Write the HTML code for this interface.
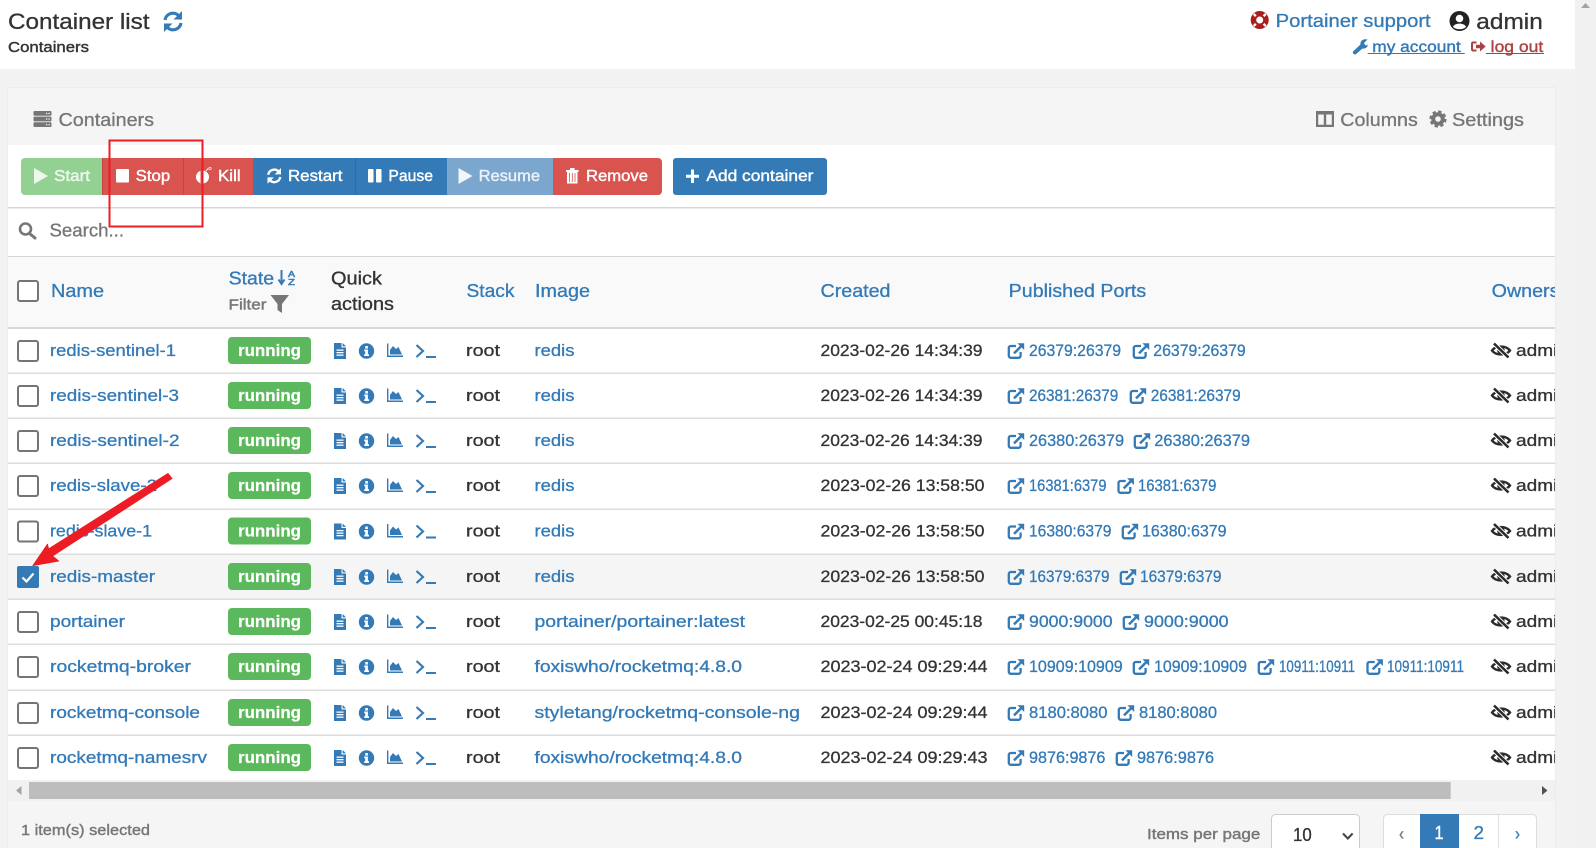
<!DOCTYPE html>
<html lang="en"><head><meta charset="utf-8"><title>Container list</title>
<style>
html,body{margin:0;padding:0;background:#f2f2f2;width:1596px;height:848px;overflow:hidden}
svg{display:block}
text{font-family:"Liberation Sans",sans-serif;font-size:16.5px;fill:#333;stroke:currentColor;stroke-width:.3;color:#333}
.l{fill:#337ab7;color:#337ab7}
.g{fill:#767676;color:#767676}
.w{fill:#fff;color:#fff;font-size:16px;stroke-width:.42}
.h{font-size:18px}
.b{font-weight:bold;font-size:17px;fill:#fff;color:#fff;stroke-width:.2}
.cb{fill:#fff;stroke:#757575;stroke-width:2}
.bd{fill:#5cb85c}
.ln{fill:#ddd}
</style></head><body>
<svg xmlns="http://www.w3.org/2000/svg" width="1596" height="848" viewBox="0 0 1596 848">
<defs>
<clipPath id="card"><rect x="8" y="88" width="1547" height="760"/></clipPath>
<g id="qa" fill="#337ab7">
 <path d="M334 -8H341.5V-3.5H346V8H334Z"/><path d="M342.6 -8L346 -4.6H342.6Z"/>
 <rect x="336.5" y="-1.5" width="7" height="1.3" fill="#fff"/><rect x="336.5" y="1" width="7" height="1.3" fill="#fff"/><rect x="336.5" y="3.5" width="7" height="1.3" fill="#fff"/>
 <circle cx="366.5" cy="0" r="7.7"/><rect x="365.2" y="-5" width="2.7" height="2.6" fill="#fff"/><path d="M364.2 -1.5H367.9V3.2H369V5H364.2V3.2H365.2V0.2H364.2Z" fill="#fff"/>
 <path d="M387 -7.5H388.4V4.5H403V6H387Z"/><path d="M390 3.5V-1L393 -5L396 -2L398.5 -4L402 3.5Z"/>
 <path d="M416.5 -6L423 0L416.5 6" fill="none" stroke="#337ab7" stroke-width="2.2"/><rect x="426" y="5" width="10" height="2"/>
</g>
<g id="ext">
 <path d="M12.6 9v3.8a2 2 0 0 1-2 2H2.8a2 2 0 0 1-2-2V5a2 2 0 0 1 2-2H8" fill="none" stroke="#337ab7" stroke-width="2.3"/>
 <path d="M6 10.4L13 3.4" fill="none" stroke="#337ab7" stroke-width="2.5"/><path d="M9.4 .2H16.2V7Z" fill="#337ab7"/>
</g>
<g id="eye">
 <path d="M1 7.5C4.5 2.2 15 2.2 19 7.5C15 12.8 5 12.8 1 7.5Z" fill="none" stroke="#2b2b2b" stroke-width="2.400"/>
 <circle cx="10" cy="7.5" r="3.800" fill="#2b2b2b"/>
 <path d="M3 0.5L17.5 14.500" stroke="#fff" stroke-width="4.400"/><path d="M3 0.5L17.5 14.500" stroke="#2b2b2b" stroke-width="2.600"/>
</g>
<g id="rowbg"><rect x="18" y="-10" width="20" height="20" rx="2" class="cb"/><rect x="228" y="-14" width="83" height="27" rx="4" class="bd"/><text class="b" x="238" y="5" textLength="63" lengthAdjust="spacingAndGlyphs">running</text><use href="#qa"/><use href="#eye" x="1491" y="-8"/></g>
<g id="ref"><path d="M3 9A8 8 0 0 1 17 5" fill="none" stroke="currentColor" stroke-width="3.200"/><path d="M20 0V8.5H11.5Z" fill="currentColor"/><path d="M19 12A8 8 0 0 1 5 16" fill="none" stroke="currentColor" stroke-width="3.200"/><path d="M2 21V12.5H10.5Z" fill="currentColor"/></g>
</defs>

<!-- page -->
<rect width="1596" height="848" fill="#f2f2f2"/>
<rect width="1575" height="69" fill="#fff"/>
<rect x="1575" width="21" height="848" fill="#f1f1f1"/>
<path d="M1581 8L1585.5 3L1590 8Z" fill="#a3a3a3"/>

<text x="8" y="29" style="font-size:22px" textLength="141.500" lengthAdjust="spacingAndGlyphs">Container list</text>
<use href="#ref" x="162" y="11" style="color:#337ab7"/>
<text x="8" y="52" style="font-size:14.500px;stroke-width:.4" textLength="81" lengthAdjust="spacingAndGlyphs">Containers</text>

<g transform="translate(1250.7,11)"><circle cx="9" cy="9" r="9" fill="#a91e1e"/><path d="M3 3L15 15M15 3L3 15" stroke="#fff" stroke-width="2.300"/><circle cx="9" cy="9" r="5.500" fill="#a91e1e"/><circle cx="9" cy="9" r="3.500" fill="#fff"/></g>
<text class="l" x="1275.7" y="27" style="font-size:18.500px" textLength="155" lengthAdjust="spacingAndGlyphs">Portainer support</text>
<g transform="translate(1449.5,11)"><circle cx="10" cy="10" r="10" fill="#222"/><circle cx="10" cy="7.500" r="3.800" fill="#fff"/><path d="M3.500 16C4.500 11.500 15.500 11.500 16.500 16C13 19 7 19 3.500 16Z" fill="#fff"/></g>
<text x="1476.3" y="29" style="font-size:22px" textLength="66.500" lengthAdjust="spacingAndGlyphs">admin</text>
<path d="M1353 51.500L1360.500 44.500C1360 41 1363 38.500 1367.500 39.500L1364 43L1365 45L1367.500 45.500L1368 43C1368.500 47 1365.500 49 1362.500 48.500L1355.500 54.500C1353.500 54.500 1352.500 53 1353 51.500Z" fill="#337ab7"/>
<text class="l" x="1372.3" y="52" style="font-size:16px;stroke-width:.4" textLength="88.500" lengthAdjust="spacingAndGlyphs">my account</text>
<rect x="1367.7" y="53" width="97" height="1" fill="#337ab7"/>
<path d="M1476.500 42.500H1473C1472 42.500 1472 43 1472 44V49C1472 50 1472 50.500 1473 50.500H1476.500" fill="none" stroke="#a94442" stroke-width="2"/>
<path d="M1476 44.800H1480V41.500L1485.700 46.500L1480 51.500V48.200H1476Z" fill="#a94442"/>
<text x="1490.7" y="52" style="font-size:16px;fill:#a94442;color:#a94442;stroke-width:.4" textLength="52.500" lengthAdjust="spacingAndGlyphs">log out</text>
<rect x="1486" y="53" width="58" height="1" fill="#a94442"/>

<!-- card -->
<rect x="7.500" y="87.500" width="1548" height="761" fill="#fff" stroke="#ececec"/>
<rect x="8" y="88" width="1547" height="57" fill="#f5f5f5"/>
<g fill="#767676"><rect x="33.500" y="111" width="18" height="4.800" rx="1"/><rect x="33.500" y="116.600" width="18" height="4.800" rx="1"/><rect x="33.500" y="122.200" width="18" height="4.800" rx="1"/></g>
<g fill="#f5f5f5"><rect x="46" y="112.800" width="1.300" height="1.300"/><rect x="48.500" y="112.800" width="1.300" height="1.300"/><rect x="46" y="118.400" width="1.300" height="1.300"/><rect x="48.500" y="118.400" width="1.300" height="1.300"/><rect x="46" y="124" width="1.300" height="1.300"/><rect x="48.500" y="124" width="1.300" height="1.300"/></g>
<text class="g h" x="58.500" y="126" textLength="95.500" lengthAdjust="spacingAndGlyphs">Containers</text>
<path fill-rule="evenodd" d="M1316 111H1334V127H1316ZM1318.200 114.500V124.800H1323.800V114.500ZM1326.200 114.500V124.800H1331.800V114.500Z" fill="#767676"/>
<text class="g h" x="1340.3" y="126" textLength="77.500" lengthAdjust="spacingAndGlyphs">Columns</text>
<circle cx="1438" cy="119" r="4.800" fill="none" stroke="#767676" stroke-width="4"/><circle cx="1438" cy="119" r="7.400" fill="none" stroke="#767676" stroke-width="2.400" stroke-dasharray="3.300 2.500"/>
<text class="g h" x="1452" y="126" textLength="72" lengthAdjust="spacingAndGlyphs">Settings</text>

<!-- toolbar -->
<path d="M102 158H25a4 4 0 0 0-4 4V191a4 4 0 0 0 4 4H102Z" fill="#92d192"/>
<rect x="102" y="158" width="81" height="37" fill="#d9534f"/><rect x="183" y="158" width="70" height="37" fill="#d9534f"/>
<rect x="183" y="158" width="1" height="37" fill="#c9433f"/><rect x="102" y="158" width="1" height="37" fill="#c9433f"/>
<rect x="253" y="158" width="102" height="37" fill="#337ab7"/><rect x="355" y="158" width="92" height="37" fill="#337ab7"/>
<rect x="355" y="158" width="1" height="37" fill="#2e6da4"/>
<rect x="447" y="158" width="106" height="37" fill="#7ba6cd"/>
<path d="M553 158H658a4 4 0 0 1 4 4V191a4 4 0 0 1-4 4H553Z" fill="#d9534f"/>
<rect x="673" y="158" width="154" height="37" rx="3" fill="#337ab7"/>
<path d="M34 168L48 176L34 184Z" fill="#fff" opacity=".85"/>
<text class="w" x="54" y="181" textLength="36" lengthAdjust="spacingAndGlyphs" opacity=".85">Start</text>
<rect x="116" y="169" width="13" height="13.500" rx="1" fill="#fff"/>
<text class="w" x="135.700" y="181" textLength="34.500" lengthAdjust="spacingAndGlyphs">Stop</text>
<circle cx="202.500" cy="177" r="6.500" fill="#fff"/><rect x="200.500" y="170" width="2" height="13" fill="#d9534f"/><path d="M206 171L208 168.500" stroke="#fff"/><circle cx="210" cy="168.500" r="1.200" fill="none" stroke="#fff" stroke-width=".7"/>
<text class="w" x="218" y="181" textLength="22.600" lengthAdjust="spacingAndGlyphs">Kill</text>
<g transform="translate(266,168) scale(.75)" style="color:#fff"><use href="#ref"/></g>
<text class="w" x="288" y="181" textLength="54.400" lengthAdjust="spacingAndGlyphs">Restart</text>
<rect x="368" y="169" width="5.500" height="13.500" rx="1" fill="#fff"/><rect x="376" y="169" width="5.500" height="13.500" rx="1" fill="#fff"/>
<text class="w" x="388.400" y="181" textLength="44.600" lengthAdjust="spacingAndGlyphs">Pause</text>
<path d="M458.500 168L472.500 176L458.500 184Z" fill="#fff" opacity=".9"/>
<text class="w" x="478.600" y="181" textLength="61.400" lengthAdjust="spacingAndGlyphs" opacity=".85">Resume</text>
<path d="M566 170H578.600V171.700H577.500V183.500H567V171.700H566ZM570 168H574.600V170H570Z" fill="#fff"/><path d="M569.500 173V182M572.300 173V182M575 173V182" stroke="#d9534f" stroke-width=".8"/>
<text class="w" x="586" y="181" textLength="62" lengthAdjust="spacingAndGlyphs">Remove</text>
<path d="M686 174.700H691V169.500H694V174.700H699V177.700H694V183H691V177.700H686Z" fill="#fff"/>
<text class="w" x="706.400" y="181" textLength="107" lengthAdjust="spacingAndGlyphs">Add container</text>

<rect x="8" y="207" width="1547" height="1.500" fill="#d6d6d6"/>
<circle cx="25.500" cy="229" r="5.500" fill="none" stroke="#767676" stroke-width="2.600"/><path d="M29.500 233.500L35 238" stroke="#767676" stroke-width="3" stroke-linecap="round"/>
<text class="g h" x="49.500" y="236.500" textLength="74.500" lengthAdjust="spacingAndGlyphs">Search...</text>
<rect x="8" y="256" width="1547" height="1.500" fill="#d6d6d6"/>

<!-- header -->
<rect x="8" y="257" width="1547" height="70" fill="#f9f9f9"/>
<rect x="8" y="327" width="1547" height="2" fill="#d8d8d8"/>
<g clip-path="url(#card)">
<rect x="18" y="281" width="20" height="20" rx="2" class="cb"/>
<text class="l h" x="51" y="297" textLength="53" lengthAdjust="spacingAndGlyphs">Name</text>
<text class="l h" x="228.600" y="284.500" textLength="45.500" lengthAdjust="spacingAndGlyphs">State</text>
<path d="M281.500 270V283M278.500 279.500L281.500 284L284.500 279.500" fill="none" stroke="#337ab7" stroke-width="2"/>
<text class="l" x="288" y="277" style="font-size:8px;stroke-width:.5" textLength="7" lengthAdjust="spacingAndGlyphs">A</text>
<text class="l" x="288" y="285" style="font-size:8px;stroke-width:.5" textLength="7" lengthAdjust="spacingAndGlyphs">Z</text>
<text class="g" x="228.500" y="309.500" style="font-size:14.500px;stroke-width:.4" textLength="38" lengthAdjust="spacingAndGlyphs">Filter</text>
<path d="M270.500 295H289L282 304V313L277.500 310V304Z" fill="#767676"/>
<text class="h" x="331" y="284.500" textLength="51" lengthAdjust="spacingAndGlyphs">Quick</text>
<text class="h" x="331" y="310" textLength="63" lengthAdjust="spacingAndGlyphs">actions</text>
<text class="l h" x="466.500" y="297" textLength="48" lengthAdjust="spacingAndGlyphs">Stack</text>
<text class="l h" x="535" y="297" textLength="55" lengthAdjust="spacingAndGlyphs">Image</text>
<text class="l h" x="820.500" y="297" textLength="70" lengthAdjust="spacingAndGlyphs">Created</text>
<text class="l h" x="1008.700" y="297" textLength="137.500" lengthAdjust="spacingAndGlyphs">Published Ports</text>
<text class="l h" x="1491.700" y="297" textLength="94" lengthAdjust="spacingAndGlyphs">Ownership</text>

<!-- rows -->
<rect x="8" y="554" width="1547" height="45" fill="#f5f5f5"/>
<g class="ln"><rect x="8" y="372.500" width="1547" height="1.500"/><rect x="8" y="417.500" width="1547" height="1.500"/><rect x="8" y="462.500" width="1547" height="1.500"/><rect x="8" y="508.500" width="1547" height="1.500"/><rect x="8" y="553.500" width="1547" height="1.500"/><rect x="8" y="598.500" width="1547" height="1.500"/><rect x="8" y="643.500" width="1547" height="1.500"/><rect x="8" y="689.500" width="1547" height="1.500"/><rect x="8" y="734.500" width="1547" height="1.500"/></g>

<g transform="translate(0,351)"><use href="#rowbg"/>
<text class="l" x="50" y="5" textLength="126" lengthAdjust="spacingAndGlyphs">redis-sentinel-1</text>
<text x="466" y="5" textLength="34" lengthAdjust="spacingAndGlyphs">root</text>
<text class="l" x="534.500" y="5" textLength="40" lengthAdjust="spacingAndGlyphs">redis</text>
<text x="820.500" y="5" textLength="162" lengthAdjust="spacingAndGlyphs">2023-02-26 14:34:39</text>
<use href="#ext" x="1008" y="-8"/><text class="l" x="1029" y="5" textLength="92" lengthAdjust="spacingAndGlyphs">26379:26379</text>
<use href="#ext" x="1133" y="-8"/><text class="l" x="1153.300" y="5" textLength="92.400" lengthAdjust="spacingAndGlyphs">26379:26379</text>
<text x="1516" y="5" textLength="52" lengthAdjust="spacingAndGlyphs">admin</text></g>

<g transform="translate(0,396)"><use href="#rowbg"/>
<text class="l" x="50" y="5" textLength="129" lengthAdjust="spacingAndGlyphs">redis-sentinel-3</text>
<text x="466" y="5" textLength="34" lengthAdjust="spacingAndGlyphs">root</text>
<text class="l" x="534.500" y="5" textLength="40" lengthAdjust="spacingAndGlyphs">redis</text>
<text x="820.500" y="5" textLength="162" lengthAdjust="spacingAndGlyphs">2023-02-26 14:34:39</text>
<use href="#ext" x="1008" y="-8"/><text class="l" x="1029" y="5" textLength="89.300" lengthAdjust="spacingAndGlyphs">26381:26379</text>
<use href="#ext" x="1130" y="-8"/><text class="l" x="1150.700" y="5" textLength="90" lengthAdjust="spacingAndGlyphs">26381:26379</text>
<text x="1516" y="5" textLength="52" lengthAdjust="spacingAndGlyphs">admin</text></g>

<g transform="translate(0,441)"><use href="#rowbg"/>
<text class="l" x="50" y="5" textLength="129.500" lengthAdjust="spacingAndGlyphs">redis-sentinel-2</text>
<text x="466" y="5" textLength="34" lengthAdjust="spacingAndGlyphs">root</text>
<text class="l" x="534.500" y="5" textLength="40" lengthAdjust="spacingAndGlyphs">redis</text>
<text x="820.500" y="5" textLength="162" lengthAdjust="spacingAndGlyphs">2023-02-26 14:34:39</text>
<use href="#ext" x="1008" y="-8"/><text class="l" x="1029" y="5" textLength="95" lengthAdjust="spacingAndGlyphs">26380:26379</text>
<use href="#ext" x="1134" y="-8"/><text class="l" x="1154.300" y="5" textLength="95.700" lengthAdjust="spacingAndGlyphs">26380:26379</text>
<text x="1516" y="5" textLength="52" lengthAdjust="spacingAndGlyphs">admin</text></g>

<g transform="translate(0,486)"><use href="#rowbg"/>
<text class="l" x="50" y="5" textLength="107" lengthAdjust="spacingAndGlyphs">redis-slave-2</text>
<text x="466" y="5" textLength="34" lengthAdjust="spacingAndGlyphs">root</text>
<text class="l" x="534.500" y="5" textLength="40" lengthAdjust="spacingAndGlyphs">redis</text>
<text x="820.500" y="5" textLength="164" lengthAdjust="spacingAndGlyphs">2023-02-26 13:58:50</text>
<use href="#ext" x="1008" y="-8"/><text class="l" x="1029" y="5" textLength="77.500" lengthAdjust="spacingAndGlyphs">16381:6379</text>
<use href="#ext" x="1117.700" y="-8"/><text class="l" x="1138" y="5" textLength="78.400" lengthAdjust="spacingAndGlyphs">16381:6379</text>
<text x="1516" y="5" textLength="52" lengthAdjust="spacingAndGlyphs">admin</text></g>

<g transform="translate(0,531.500)"><use href="#rowbg"/>
<text class="l" x="50" y="5" textLength="102" lengthAdjust="spacingAndGlyphs">redis-slave-1</text>
<text x="466" y="5" textLength="34" lengthAdjust="spacingAndGlyphs">root</text>
<text class="l" x="534.500" y="5" textLength="40" lengthAdjust="spacingAndGlyphs">redis</text>
<text x="820.500" y="5" textLength="164" lengthAdjust="spacingAndGlyphs">2023-02-26 13:58:50</text>
<use href="#ext" x="1008" y="-8"/><text class="l" x="1029" y="5" textLength="82.500" lengthAdjust="spacingAndGlyphs">16380:6379</text>
<use href="#ext" x="1122" y="-8"/><text class="l" x="1142" y="5" textLength="84.600" lengthAdjust="spacingAndGlyphs">16380:6379</text>
<text x="1516" y="5" textLength="52" lengthAdjust="spacingAndGlyphs">admin</text></g>

<g transform="translate(0,577)"><use href="#rowbg"/>
<rect x="17" y="-11" width="22" height="22" rx="2" fill="#337ab7"/><path d="M22.500 0.500L26.500 4.500L33.500 -3.500" fill="none" stroke="#fff" stroke-width="2.200"/>
<text class="l" x="50" y="5" textLength="105" lengthAdjust="spacingAndGlyphs">redis-master</text>
<text x="466" y="5" textLength="34" lengthAdjust="spacingAndGlyphs">root</text>
<text class="l" x="534.500" y="5" textLength="40" lengthAdjust="spacingAndGlyphs">redis</text>
<text x="820.500" y="5" textLength="164" lengthAdjust="spacingAndGlyphs">2023-02-26 13:58:50</text>
<use href="#ext" x="1008" y="-8"/><text class="l" x="1029" y="5" textLength="80.500" lengthAdjust="spacingAndGlyphs">16379:6379</text>
<use href="#ext" x="1120" y="-8"/><text class="l" x="1140" y="5" textLength="81.500" lengthAdjust="spacingAndGlyphs">16379:6379</text>
<text x="1516" y="5" textLength="52" lengthAdjust="spacingAndGlyphs">admin</text></g>

<g transform="translate(0,622)"><use href="#rowbg"/>
<text class="l" x="50" y="5" textLength="75" lengthAdjust="spacingAndGlyphs">portainer</text>
<text x="466" y="5" textLength="34" lengthAdjust="spacingAndGlyphs">root</text>
<text class="l" x="534.500" y="5" textLength="210.500" lengthAdjust="spacingAndGlyphs">portainer/portainer:latest</text>
<text x="820.500" y="5" textLength="162" lengthAdjust="spacingAndGlyphs">2023-02-25 00:45:18</text>
<use href="#ext" x="1008" y="-8"/><text class="l" x="1029" y="5" textLength="83.600" lengthAdjust="spacingAndGlyphs">9000:9000</text>
<use href="#ext" x="1123" y="-8"/><text class="l" x="1144" y="5" textLength="84.600" lengthAdjust="spacingAndGlyphs">9000:9000</text>
<text x="1516" y="5" textLength="52" lengthAdjust="spacingAndGlyphs">admin</text></g>

<g transform="translate(0,667)"><use href="#rowbg"/>
<text class="l" x="50" y="5" textLength="141" lengthAdjust="spacingAndGlyphs">rocketmq-broker</text>
<text x="466" y="5" textLength="34" lengthAdjust="spacingAndGlyphs">root</text>
<text class="l" x="534.500" y="5" textLength="207.500" lengthAdjust="spacingAndGlyphs">foxiswho/rocketmq:4.8.0</text>
<text x="820.500" y="5" textLength="167" lengthAdjust="spacingAndGlyphs">2023-02-24 09:29:44</text>
<use href="#ext" x="1008" y="-8"/><text class="l" x="1029" y="5" textLength="93.700" lengthAdjust="spacingAndGlyphs">10909:10909</text>
<use href="#ext" x="1133" y="-8"/><text class="l" x="1154" y="5" textLength="93" lengthAdjust="spacingAndGlyphs">10909:10909</text>
<use href="#ext" x="1258" y="-8"/><text class="l" x="1279" y="5" textLength="76" lengthAdjust="spacingAndGlyphs">10911:10911</text>
<use href="#ext" x="1366.700" y="-8"/><text class="l" x="1387" y="5" textLength="77" lengthAdjust="spacingAndGlyphs">10911:10911</text>
<text x="1516" y="5" textLength="52" lengthAdjust="spacingAndGlyphs">admin</text></g>

<g transform="translate(0,713)"><use href="#rowbg"/>
<text class="l" x="50" y="5" textLength="150" lengthAdjust="spacingAndGlyphs">rocketmq-console</text>
<text x="466" y="5" textLength="34" lengthAdjust="spacingAndGlyphs">root</text>
<text class="l" x="534.500" y="5" textLength="265.500" lengthAdjust="spacingAndGlyphs">styletang/rocketmq-console-ng</text>
<text x="820.500" y="5" textLength="167" lengthAdjust="spacingAndGlyphs">2023-02-24 09:29:44</text>
<use href="#ext" x="1008" y="-8"/><text class="l" x="1029" y="5" textLength="78.500" lengthAdjust="spacingAndGlyphs">8180:8080</text>
<use href="#ext" x="1118" y="-8"/><text class="l" x="1139" y="5" textLength="78" lengthAdjust="spacingAndGlyphs">8180:8080</text>
<text x="1516" y="5" textLength="52" lengthAdjust="spacingAndGlyphs">admin</text></g>

<g transform="translate(0,758)"><use href="#rowbg"/>
<text class="l" x="50" y="5" textLength="157" lengthAdjust="spacingAndGlyphs">rocketmq-namesrv</text>
<text x="466" y="5" textLength="34" lengthAdjust="spacingAndGlyphs">root</text>
<text class="l" x="534.500" y="5" textLength="207.500" lengthAdjust="spacingAndGlyphs">foxiswho/rocketmq:4.8.0</text>
<text x="820.500" y="5" textLength="167" lengthAdjust="spacingAndGlyphs">2023-02-24 09:29:43</text>
<use href="#ext" x="1008" y="-8"/><text class="l" x="1029" y="5" textLength="76.400" lengthAdjust="spacingAndGlyphs">9876:9876</text>
<use href="#ext" x="1116" y="-8"/><text class="l" x="1137" y="5" textLength="77" lengthAdjust="spacingAndGlyphs">9876:9876</text>
<text x="1516" y="5" textLength="52" lengthAdjust="spacingAndGlyphs">admin</text></g>

<!-- scrollbar & footer -->
<rect x="8" y="780" width="1547" height="68" fill="#f5f5f5"/>
<rect x="8" y="780" width="1547" height="21" fill="#f1f1f1"/>
<rect x="29" y="782" width="1421.700" height="17" fill="#bdbdbd"/>
<path d="M21.500 786V795L16 790.500Z" fill="#a3a3a3"/><path d="M1542 786V795L1547.500 790.500Z" fill="#505050"/>
<text class="g" x="21" y="835" style="font-size:15px;stroke-width:.4" textLength="129" lengthAdjust="spacingAndGlyphs">1 item(s) selected</text>
<text class="g" x="1147" y="839" style="font-size:15px;stroke-width:.4" textLength="113.300" lengthAdjust="spacingAndGlyphs">Items per page</text>
<rect x="1271.500" y="814.500" width="88" height="50" rx="4" fill="#fff" stroke="#ccc"/>
<text x="1293" y="841" class="h" textLength="18.700" lengthAdjust="spacingAndGlyphs">10</text>
<path d="M1343 833.500L1347.800 838.500L1352.600 833.500" fill="none" stroke="#444" stroke-width="2"/>
<rect x="1383.500" y="814.500" width="153" height="50" rx="4" fill="#fff" stroke="#ddd"/>
<rect x="1420" y="814" width="39" height="34" fill="#337ab7"/>
<rect x="1498" y="815" width="1" height="33" fill="#ddd"/>
<text class="g h" x="1399" y="840" textLength="5" lengthAdjust="spacingAndGlyphs">‹</text>
<text class="w h" x="1434.500" y="839" textLength="9" lengthAdjust="spacingAndGlyphs" style="font-size:18px">1</text>
<text class="l h" x="1473.500" y="839" textLength="10.500" lengthAdjust="spacingAndGlyphs">2</text>
<text class="l h" x="1515" y="840" textLength="5" lengthAdjust="spacingAndGlyphs">›</text>
</g>

<!-- annotations -->
<rect x="109.500" y="140.500" width="93" height="86" fill="none" stroke="#ed1c24" stroke-width="2"/>
<path d="M168 473.500L172 478.500L52.500 556L58.500 561L33 565.500L47.500 544.300L48.500 549Z" fill="#ed1c24" stroke="#ed1c24" stroke-linejoin="round"/>
</svg>
</body></html>
